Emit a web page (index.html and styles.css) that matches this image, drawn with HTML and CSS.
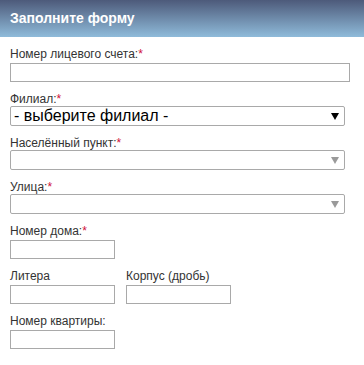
FILE: index.html
```html
<!DOCTYPE html>
<html lang="ru">
<head>
    <meta charset="UTF-8">
    <meta name="viewport" content="width=device-width, initial-scale=1.0">
    <title>Заполните форму</title>
    <link rel="stylesheet" href="styles.css">
</head>
<body>
    <div class="form-header">Заполните форму</div>

    <form class="address-form">
        <div class="field">
            <label for="account">Номер лицевого счета:<span class="req">*</span></label>
            <input type="text" id="account" class="text-input wide">
        </div>

        <div class="field">
            <label for="branch">Филиал:<span class="req">*</span></label>
            <div class="select-wrap">
                <select id="branch" class="big">
                    <option>- выберите филиал -</option>
                </select>
            </div>
        </div>

        <div class="field">
            <label for="town">Населённый пункт:<span class="req">*</span></label>
            <div class="select-wrap inactive">
                <select id="town"><option></option></select>
            </div>
        </div>

        <div class="field">
            <label for="street">Улица:<span class="req">*</span></label>
            <div class="select-wrap inactive">
                <select id="street"><option></option></select>
            </div>
        </div>

        <div class="field">
            <label for="house">Номер дома:<span class="req">*</span></label>
            <input type="text" id="house" class="text-input short">
        </div>

        <div class="field-row">
            <div class="field">
                <label for="litera">Литера</label>
                <input type="text" id="litera" class="text-input short">
            </div>
            <div class="field">
                <label for="korpus">Корпус (дробь)</label>
                <input type="text" id="korpus" class="text-input short">
            </div>
        </div>

        <div class="field">
            <label for="flat">Номер квартиры:</label>
            <input type="text" id="flat" class="text-input short">
        </div>
    </form>
</body>
</html>
```

FILE: styles.css
```css
* {
    box-sizing: border-box;
}

body {
    margin: 0;
    font-family: "Liberation Sans", Arial, sans-serif;
    background: #fff;
    color: #333;
}

/* шапка */
.form-header {
    height: 37px;
    line-height: 37px;
    padding-left: 10px;
    background: linear-gradient(to bottom, #4d5a7a, #8fbbda);
    color: #fff;
    font-size: 14px;
    font-weight: bold;
}

/* форма */
.address-form {
    padding: 11px 10px 0;
}

.field {
    margin-bottom: 11px;
}

.field label {
    display: block;
    font-size: 12px;
    line-height: 13px;
    color: #333;
}

.req {
    color: #d0103a;
}

.text-input {
    display: block;
    margin: 2px 0 0;
    height: 19px;
    border: 1px solid #a9a9a9;
    border-radius: 0;
    padding: 0 3px;
    font-family: inherit;
    font-size: 12px;
    background: #fff;
}

.text-input.wide {
    width: 340px;
}

.text-input.short {
    width: 105px;
}

.field-row {
    display: flex;
    gap: 11px;
}

/* селекты */
.select-wrap {
    position: relative;
    width: 335px;
}

.select-wrap select {
    display: block;
    width: 100%;
    height: 20px;
    margin: 0;
    padding: 0 20px 0 3px;
    border: 1px solid #a9a9a9;
    border-radius: 2px;
    background-color: #ffffff;
    -webkit-appearance: none;
    appearance: none;
    font-family: inherit;
    font-size: 12px;
    color: #000;
}

.select-wrap select.big {
    font-size: 16px;
    line-height: 18px;
}

.select-wrap::after {
    content: "";
    position: absolute;
    right: 6px;
    top: 7px;
    border-left: 4px solid transparent;
    border-right: 4px solid transparent;
    border-top: 7px solid #000;
    pointer-events: none;
}

.select-wrap.inactive::after {
    border-top-color: #9a9a9a;
}
```
